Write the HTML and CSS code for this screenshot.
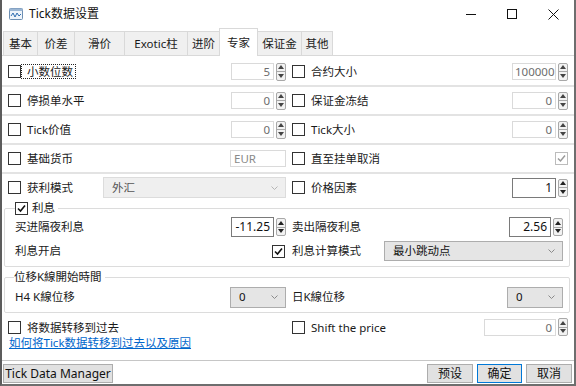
FILE: index.html
```html
<!DOCTYPE html>
<html lang="zh">
  <head>
    <meta charset="UTF-8" />
    <title>Tick数据设置</title>
    <link rel="stylesheet" href="styles.css">
  </head>
  <body>
    <div class="window">
      <div class="titlebar">
        <svg class="app-icon" width="14" height="12" viewBox="0 0 14 12">
          <rect x="0.5" y="0.5" width="13" height="11" rx="1" fill="#eef4fa" stroke="#6d8fb3"/>
          <rect x="0.5" y="0.5" width="13" height="2.5" fill="#9bb6d3"/>
          <polyline points="2,8 4,5 6,9 8,5 10,8 12,6" fill="none" stroke="#2f6db0" stroke-width="1"/>
        </svg>
        <span class="title">Tick数据设置</span>
        <div class="win-controls">
          <svg width="10" height="10" viewBox="0 0 10 10"><line x1="0" y1="5.5" x2="10" y2="5.5" stroke="#111"/></svg>
          <svg width="10" height="10" viewBox="0 0 10 10"><rect x="0.5" y="0.5" width="9" height="9" fill="none" stroke="#111"/></svg>
          <svg width="11" height="11" viewBox="0 0 11 11"><path d="M0.5 0.5 L10.5 10.5 M10.5 0.5 L0.5 10.5" stroke="#111"/></svg>
        </div>
      </div>

      <div class="tabs">
        <div class="tab">基本</div>
        <div class="tab">价差</div>
        <div class="tab">滑价</div>
        <div class="tab">Exotic柱</div>
        <div class="tab">进阶</div>
        <div class="tab active">专家</div>
        <div class="tab">保证金</div>
        <div class="tab">其他</div>
      </div>

      <div class="panel">
        <div class="row">
          <div class="cell">
            <span class="box"></span><span class="lbl focus">小数位数</span>
            <div class="spin">
              <span class="field">5</span>
              <span class="spin-btn"><i class="up"></i><i class="down"></i></span>
            </div>
          </div>
          <div class="cell right">
            <span class="box"></span><span class="lbl">合约大小</span>
            <div class="spin">
              <span class="field wide clip">100000</span>
              <span class="spin-btn"><i class="up"></i><i class="down"></i></span>
            </div>
          </div>
        </div>

        <div class="row">
          <div class="cell">
            <span class="box"></span><span class="lbl">停损单水平</span>
            <div class="spin">
              <span class="field">0</span>
              <span class="spin-btn"><i class="up"></i><i class="down"></i></span>
            </div>
          </div>
          <div class="cell right">
            <span class="box"></span><span class="lbl">保证金冻结</span>
            <div class="spin">
              <span class="field wide">0</span>
              <span class="spin-btn"><i class="up"></i><i class="down"></i></span>
            </div>
          </div>
        </div>

        <div class="row">
          <div class="cell">
            <span class="box"></span><span class="lbl">Tick价值</span>
            <div class="spin">
              <span class="field">0</span>
              <span class="spin-btn"><i class="up"></i><i class="down"></i></span>
            </div>
          </div>
          <div class="cell right">
            <span class="box"></span><span class="lbl">Tick大小</span>
            <div class="spin">
              <span class="field wide">0</span>
              <span class="spin-btn"><i class="up"></i><i class="down"></i></span>
            </div>
          </div>
        </div>

        <div class="row">
          <div class="cell">
            <span class="box"></span><span class="lbl">基础货币</span>
            <span class="field text">EUR</span>
          </div>
          <div class="cell right">
            <span class="box"></span><span class="lbl">直至挂单取消</span>
            <span class="box checked disabled end">
              <svg width="11" height="11" viewBox="0 0 11 11"><path d="M2 5.5 L4.5 8 L9 2.5" fill="none" stroke="#9a9a9a" stroke-width="1.5"/></svg>
            </span>
          </div>
        </div>

        <div class="row last">
          <div class="cell">
            <span class="box"></span><span class="lbl">获利模式</span>
            <div class="select disabled mode">
              <span>外汇</span>
              <svg class="chev" width="7" height="4" viewBox="0 0 7 4"><polyline points="0.5,0.5 3.5,3.5 6.5,0.5" fill="none" stroke="#b5b5b5"/></svg>
            </div>
          </div>
          <div class="cell right">
            <span class="box"></span><span class="lbl">价格因素</span>
            <div class="spin">
              <span class="field wide on">1</span>
              <span class="spin-btn on"><i class="up"></i><i class="down"></i></span>
            </div>
          </div>
        </div>

        <fieldset class="group">
          <legend class="legend">
            <span class="box checked">
              <svg width="11" height="11" viewBox="0 0 11 11"><path d="M2 5.5 L4.5 8 L9 2.5" fill="none" stroke="#111" stroke-width="1.6"/></svg>
            </span>
            <span>利息</span>
          </legend>
          <div class="grid2">
            <div class="gcell">
              <span>买进隔夜利息</span>
              <div class="spin">
                <span class="field on">-11.25</span>
                <span class="spin-btn on"><i class="up"></i><i class="down"></i></span>
              </div>
            </div>
            <div class="gcell">
              <span>卖出隔夜利息</span>
              <div class="spin">
                <span class="field on narrow">2.56</span>
                <span class="spin-btn on"><i class="up"></i><i class="down"></i></span>
              </div>
            </div>
            <div class="gcell">
              <span>利息开启</span>
              <span class="box checked end">
                <svg width="11" height="11" viewBox="0 0 11 11"><path d="M2 5.5 L4.5 8 L9 2.5" fill="none" stroke="#111" stroke-width="1.6"/></svg>
              </span>
            </div>
            <div class="gcell">
              <span>利息计算模式</span>
              <div class="select calc">
                <span>最小跳动点</span>
                <svg class="chev" width="7" height="4" viewBox="0 0 7 4"><polyline points="0.5,0.5 3.5,3.5 6.5,0.5" fill="none" stroke="#8a8a8a"/></svg>
              </div>
            </div>
          </div>
        </fieldset>

        <fieldset class="group shift">
          <legend class="legend plain">位移K線開始時間</legend>
          <div class="grid2">
            <div class="gcell">
              <span>H4 K線位移</span>
              <div class="select small">
                <span>0</span>
                <svg class="chev" width="7" height="4" viewBox="0 0 7 4"><polyline points="0.5,0.5 3.5,3.5 6.5,0.5" fill="none" stroke="#8a8a8a"/></svg>
              </div>
            </div>
            <div class="gcell">
              <span>日K線位移</span>
              <div class="select small">
                <span>0</span>
                <svg class="chev" width="7" height="4" viewBox="0 0 7 4"><polyline points="0.5,0.5 3.5,3.5 6.5,0.5" fill="none" stroke="#8a8a8a"/></svg>
              </div>
            </div>
          </div>
        </fieldset>

        <div class="row past">
          <div class="cell">
            <span class="box"></span><span class="lbl">将数据转移到过去</span>
          </div>
          <div class="cell right">
            <span class="box"></span><span class="lbl">Shift the price</span>
            <div class="spin">
              <span class="field long">0</span>
              <span class="spin-btn"><i class="up"></i><i class="down"></i></span>
            </div>
          </div>
        </div>
        <a href="#" class="link">如何将Tick数据转移到过去以及原因</a>
      </div>

      <div class="footer">
        <button class="btn manager">Tick Data Manager</button>
        <button class="btn preset">预设</button>
        <button class="btn default">确定</button>
        <button class="btn">取消</button>
      </div>
    </div>
  </body>
</html>
```

FILE: styles.css
```css
* {
  margin: 0;
  padding: 0;
  box-sizing: border-box;
}

body {
  font-family: "Noto Sans", "Noto Sans CJK SC", sans-serif;
  font-size: 11.5px;
  line-height: 14px;
  color: #1a1a1a;
  background: #fff;
}

.window {
  width: 576px;
  height: 386px;
  background: #fff;
  border-left: 2px solid #5c5c5c;
  border-right: 2px solid #6e6e6e;
  border-bottom: 2px solid #6e6e6e;
  display: flex;
  flex-direction: column;
  overflow: hidden;
}

/* Title bar */
.titlebar {
  height: 28px;
  display: flex;
  align-items: center;
  padding-left: 7px;
  flex-shrink: 0;
}

.app-icon {
  margin-right: 6px;
}

.title {
  font-size: 12px;
  color: #111;
}

.win-controls {
  margin-left: auto;
  margin-right: 15px;
  display: flex;
  align-items: center;
  gap: 31px;
}

/* Tabs */
.tabs {
  height: 28px;
  display: flex;
  align-items: flex-end;
  padding-left: 1px;
  border-bottom: 1px solid #d9d9d9;
  flex-shrink: 0;
}

.tab {
  height: 24px;
  background: #f0f0f0;
  border: 1px solid #d9d9d9;
  border-bottom: none;
  margin-right: -1px;
  display: flex;
  align-items: center;
  justify-content: center;
  color: #1a1a1a;
}

.tab:nth-child(1) { width: 35px; }
.tab:nth-child(2) { width: 38px; }
.tab:nth-child(3) { width: 51px; }
.tab:nth-child(4) { width: 64px; }
.tab:nth-child(5) { width: 33px; }
.tab:nth-child(6) { width: 39px; }
.tab:nth-child(7) { width: 45px; }
.tab:nth-child(8) { width: 32px; }

.tab.active {
  height: 28px;
  background: #fff;
  margin-bottom: -1px;
  position: relative;
  z-index: 1;
}

/* Panel rows */
.panel {
  flex: 1;
  min-height: 0;
  overflow: hidden;
  padding-top: 2px;
}

.row {
  display: grid;
  grid-template-columns: 286px 1fr;
  height: 29px;
  border-bottom: 2px solid #e3e3e3;
}

.row.last {
  height: 27px;
  border-bottom: none;
}

.cell {
  display: flex;
  align-items: center;
  padding: 0 2px 0 6px;
}

.cell.right {
  padding: 0 6px 0 4px;
}

.box {
  width: 13px;
  height: 13px;
  border: 1px solid #333;
  background: #fff;
  flex-shrink: 0;
  display: flex;
  align-items: center;
  justify-content: center;
}

.box.disabled {
  border-color: #bcbcbc;
}

.box.end {
  margin-left: auto;
}

.lbl {
  padding: 0 2px 0 5px;
  border: 1px dotted transparent;
  line-height: 13px;
}

.lbl.focus {
  border-color: #222;
}

/* Numeric fields */
.spin {
  margin-left: auto;
  display: flex;
  align-items: center;
  gap: 2px;
}

.field {
  width: 43px;
  height: 17px;
  border: 1px solid #dadada;
  color: #6d6d6d;
  text-align: right;
  padding-right: 3px;
  line-height: 15px;
  background: #fff;
  white-space: nowrap;
  overflow: hidden;
}

.field.wide { width: 44px; }
.field.clip { text-align: left; padding-left: 2px; }
.field.long { width: 72px; }

.field.text {
  margin-left: auto;
  width: 56px;
  text-align: left;
  padding-left: 3px;
  color: #8a8a8a;
}

.field.on {
  height: 20px;
  line-height: 18px;
  border-color: #7a7a7a;
  color: #111;
  font-size: 12px;
}

.field.narrow { width: 42px; }

.spin-btn {
  width: 10px;
  height: 18px;
  border: 1px solid #a8a8a8;
  border-radius: 2px;
  display: flex;
  flex-direction: column;
  background: #f2f2f2;
}

.spin-btn i {
  flex: 1;
  display: flex;
  align-items: center;
  justify-content: center;
}

.spin-btn i + i {
  border-top: 1px solid #a8a8a8;
}

.spin-btn .up::before {
  content: '';
  border-left: 3px solid transparent;
  border-right: 3px solid transparent;
  border-bottom: 4px solid #444;
}

.spin-btn .down::before {
  content: '';
  border-left: 3px solid transparent;
  border-right: 3px solid transparent;
  border-top: 4px solid #444;
}

.spin-btn.on .up::before { border-bottom-color: #222; }
.spin-btn.on .down::before { border-top-color: #222; }

/* Drop-downs */
.select {
  margin-left: auto;
  height: 21px;
  background: #e5e5e5;
  border: 1px solid #adadad;
  display: flex;
  align-items: center;
  padding: 0 7px 0 8px;
  color: #111;
}

.select .chev {
  margin-left: auto;
}

.select.disabled {
  background: #efefef;
  border-color: #dcdcdc;
  color: #555;
}

.select.mode { width: 183px; }
.select.calc { width: 179px; height: 20px; }
.select.small { width: 56px; }

/* Group boxes */
.group {
  margin: 0 4px 0 2px;
  border: 1px solid #dcdcdc;
  border-radius: 2px;
  padding: 0 6px 3px 10px;
}

.group.shift {
  margin-top: 3px;
  padding-top: 1px;
  padding-bottom: 3px;
}

.legend {
  display: flex;
  align-items: center;
  gap: 4px;
  padding-right: 3px;
  height: 14px;
  line-height: 14px;
}

.legend.plain {
  margin-left: -1px;
}

.grid2 {
  display: grid;
  grid-template-columns: 271px 271px;
  column-gap: 6px;
  grid-auto-rows: 24px;
}

.gcell {
  display: flex;
  align-items: center;
}

.gcell .box.end {
  margin-right: 1px;
}

/* Bottom options */
.row.past {
  margin-top: 5px;
  height: 18px;
  border-bottom: none;
}

.link {
  display: block;
  margin-left: 7px;
  color: #0066cc;
  text-decoration: underline;
  line-height: 14px;
  width: fit-content;
}

/* Footer */
.footer {
  height: 24px;
  flex-shrink: 0;
  border-top: 1px solid #c6c6c6;
  display: flex;
  align-items: flex-start;
  gap: 4px;
  padding: 3px 2px 0 1px;
}

.btn {
  height: 19px;
  width: 46px;
  font-family: inherit;
  font-size: 12px;
  line-height: 16px;
  background: #e1e1e1;
  border: 1px solid #adadad;
  color: #111;
}

.btn.manager {
  width: 110px;
}

.btn.preset {
  margin-left: auto;
}

.btn.default {
  width: 45px;
  border-color: #0078d7;
}
```
